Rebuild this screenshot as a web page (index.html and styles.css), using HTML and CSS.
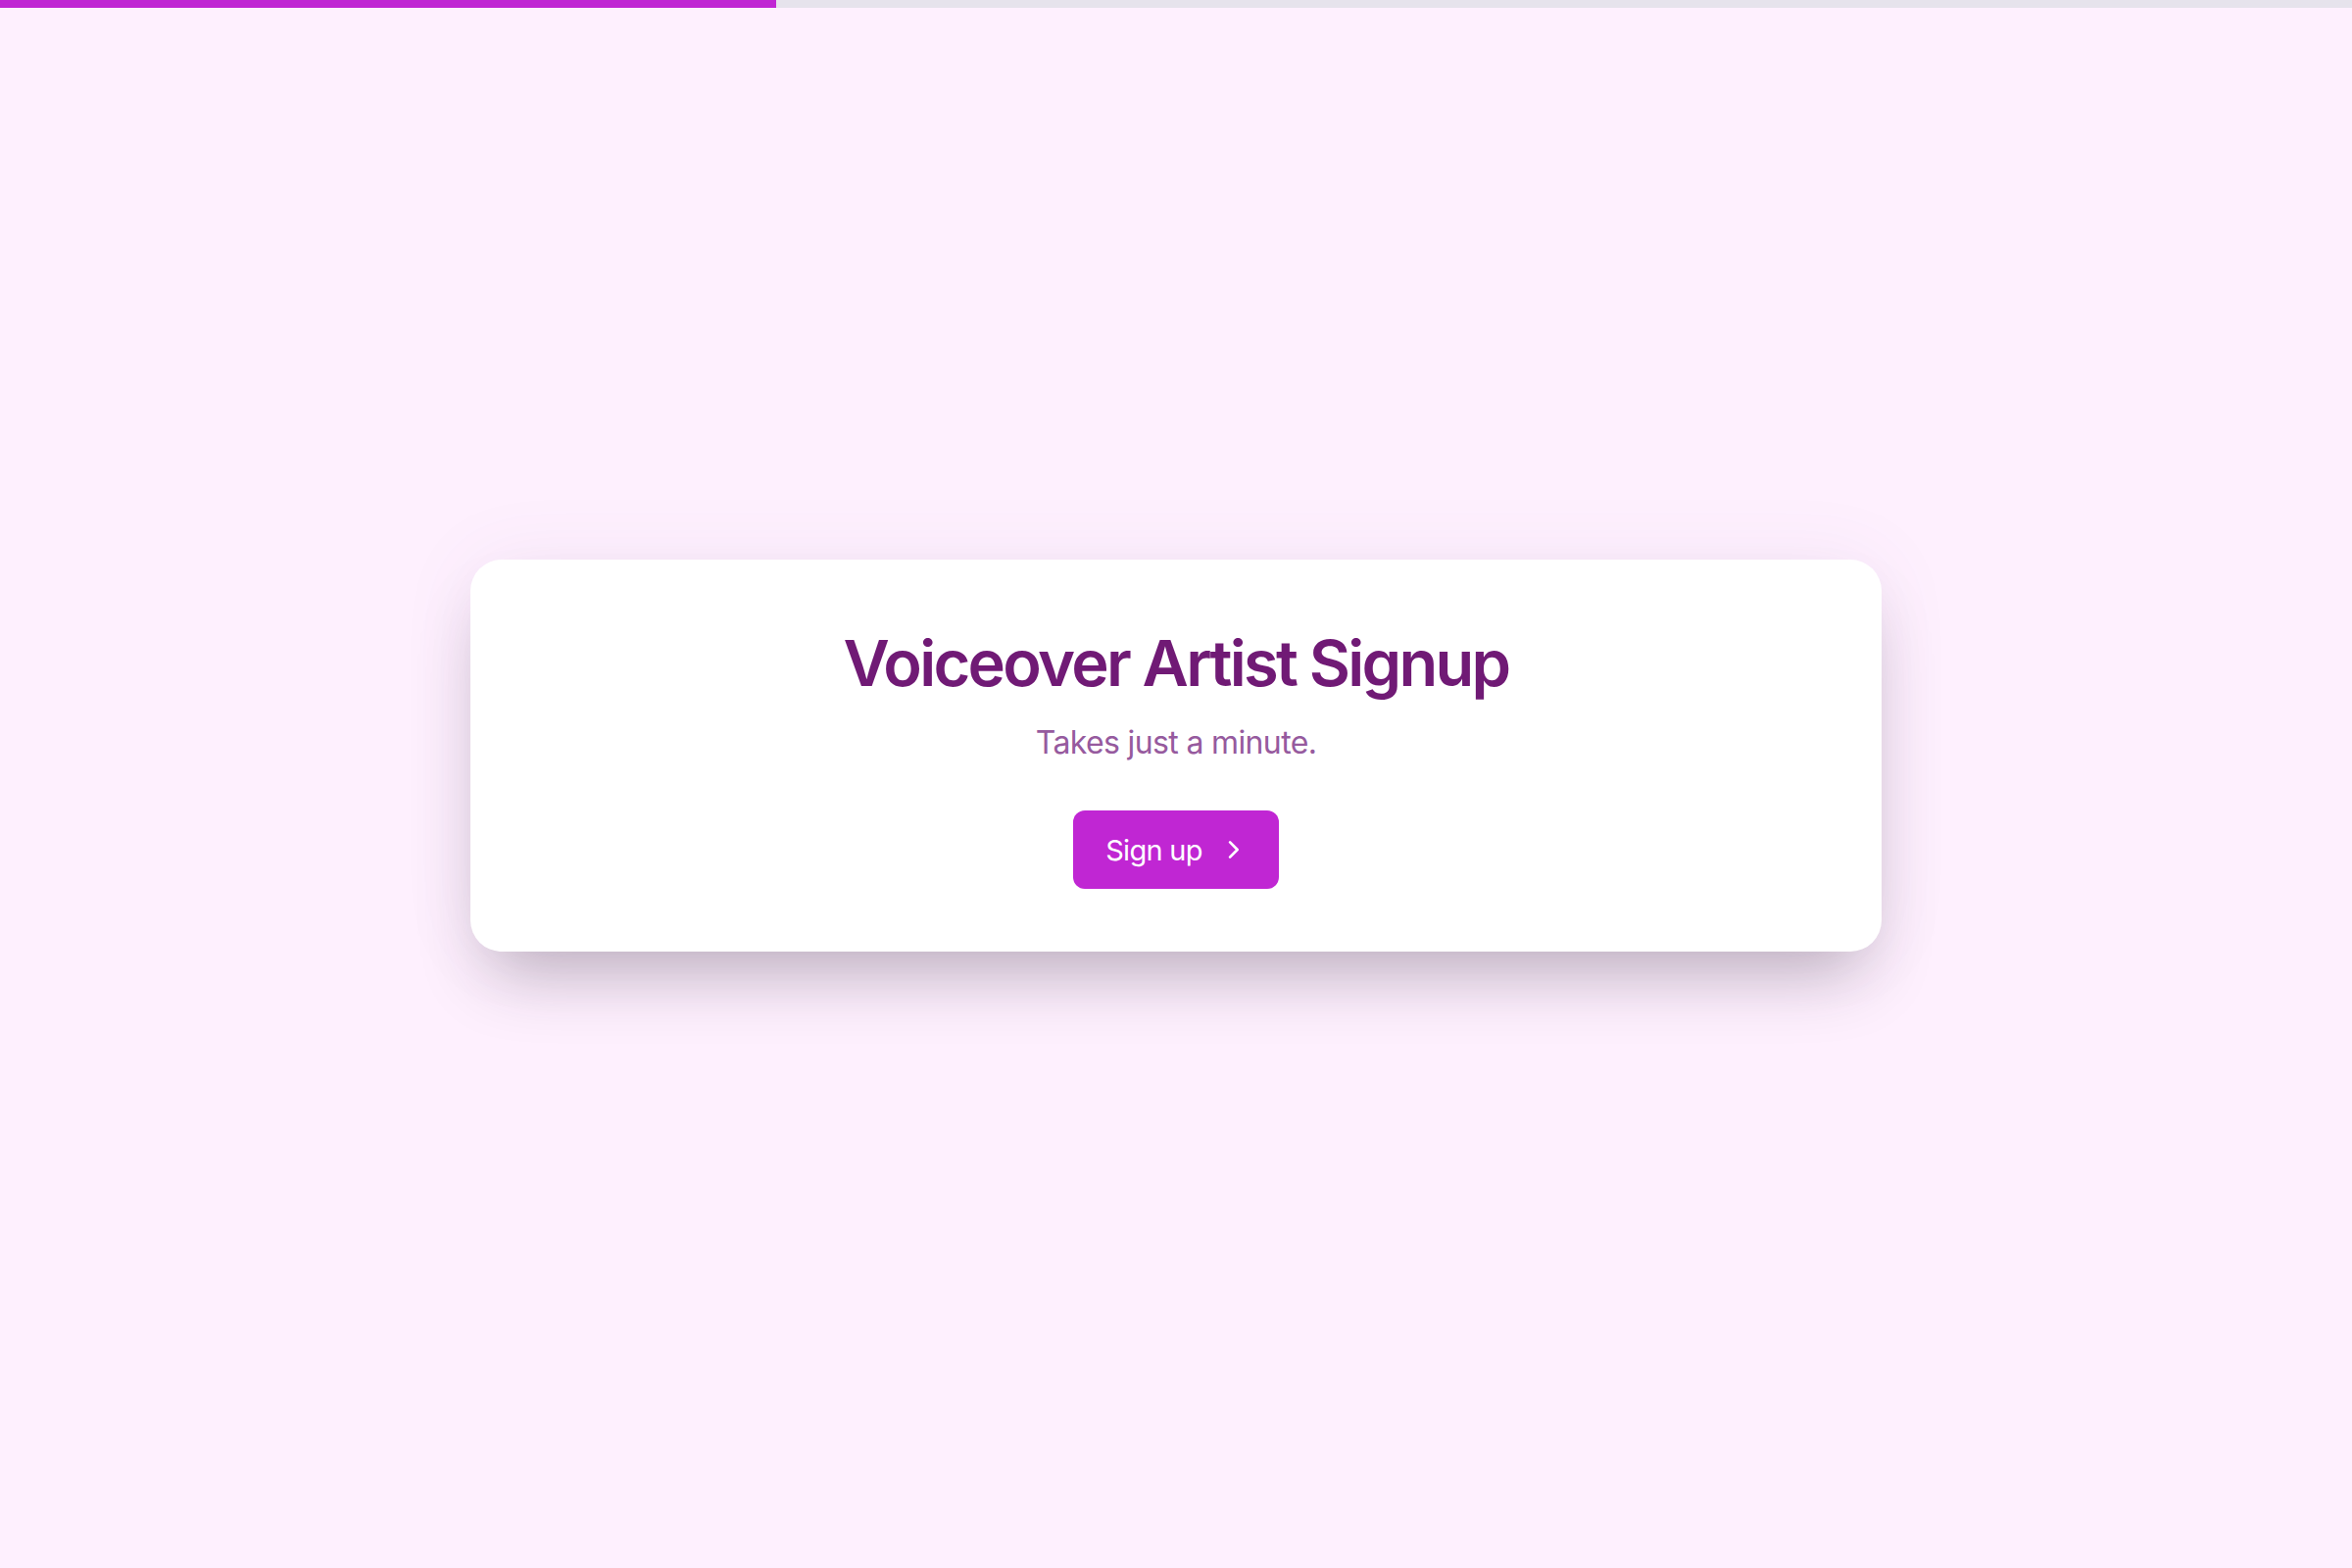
FILE: index.html
```html
<!DOCTYPE html>
<html lang="en">
<head>
  <meta charset="UTF-8">
  <meta name="viewport" content="width=device-width, initial-scale=1.0">
  <title>Voiceover Artist Signup</title>
  <link rel="stylesheet" href="styles.css">
</head>
<body>
  <div class="progress">
    <div class="progress-fill" style="width: 33%"></div>
  </div>

  <main class="stage">
    <div class="card">
      <h1>Voiceover Artist Signup</h1>
      <p class="lead">Takes just a minute.</p>
      <button class="btn" type="button">
        Sign up
        <svg class="chev" viewBox="0 0 24 24" width="28" height="28" fill="none" stroke="currentColor" stroke-width="2.3" stroke-linecap="round" stroke-linejoin="round">
          <path d="M9.5 5.5l6.5 6.5-6.5 6.5"/>
        </svg>
      </button>
    </div>
  </main>
</body>
</html>
```

FILE: styles.css
```css
* { box-sizing: border-box; }
body {
  font-family: Inter, 'Noto Sans', sans-serif;
  margin: 0;
  padding: 0;
  background: #fef0fe;
  color: #701a75;
  min-height: 100vh;
  display: flex;
  flex-direction: column;
}
.progress {
  height: 8px;
  background: #e6e3ec;
}
.progress-fill {
  height: 100%;
  background: #c026d3;
}
.stage {
  flex: 1;
  display: flex;
  align-items: center;
  justify-content: center;
  padding-bottom: 66px;
}
.card {
  width: 1440px;
  background: white;
  border-radius: 32px;
  box-shadow: 0 40px 70px -20px rgba(40, 30, 45, 0.3), 0 0 80px rgba(120, 80, 140, 0.07);
  padding: 67px 40px 64px;
  text-align: center;
}
.card h1 {
  margin: 0;
  font-size: 65px;
  font-weight: 600;
  letter-spacing: -0.042em;
  line-height: 1.2;
  color: #701a75;
}
.lead {
  margin: 22px 0 0;
  font-size: 32px;
  color: #965a9e;
  letter-spacing: -0.02em;
}
.btn {
  margin-top: 50px;
  display: inline-flex;
  align-items: center;
  gap: 17px;
  height: 80px;
  padding: 0 33px 0 33px;
  border: none;
  border-radius: 12px;
  background: #c026d3;
  color: white;
  font-family: inherit;
  font-size: 29px;
  letter-spacing: -0.025em;
  cursor: pointer;
}
.chev { display: block; }
```
